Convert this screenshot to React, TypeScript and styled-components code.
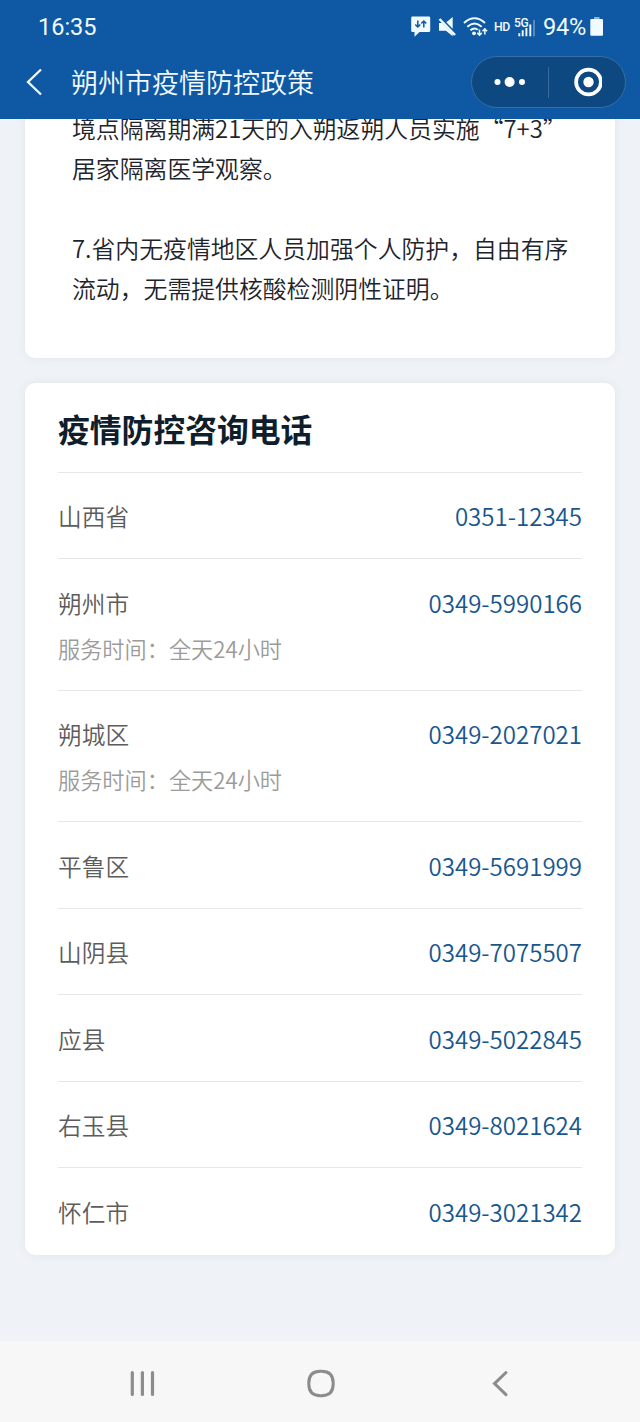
import React from 'react';
import styled, { createGlobalStyle } from 'styled-components';

const GlobalStyle = createGlobalStyle`
  * { box-sizing: border-box; }
  body { margin: 0; background: #eff2f7; }
`;

const Screen = styled.div`
  display: flex;
  flex-direction: column;
  width: 640px;
  height: 1422px;
  overflow: hidden;
  background: #eff3f8;
  font-family: 'Noto Sans CJK SC', sans-serif;
  font-weight: 350;
`;

const Header = styled.header`
  flex: none;
  height: 119px;
  background: #0f59a4;
  color: #f1fbff;
`;

const StatusBar = styled.div`
  display: flex;
  align-items: center;
  justify-content: space-between;
  height: 54px;
  padding: 0 36px 0 38px;
  font-family: Roboto, sans-serif;
  font-weight: 400;
`;

const Clock = styled.span`
  font-size: 23.5px;
  line-height: 28px;
`;

const StatusIcons = styled.div`
  display: flex;
  align-items: center;
  svg { display: block; flex: none; }
`;

const MessageSvg = styled.svg`
  margin-right: 7px;
`;

const MuteSvg = styled.svg`
  margin-right: 6px;
`;

const HdLabel = styled.span`
  width: 20px;
  margin-left: 6px;
  font-size: 12.3px;
  font-weight: 500;
  line-height: 14px;
  letter-spacing: -0.5px;
`;

const Percent = styled.span`
  width: 47px;
  margin-left: 7px;
  font-size: 23.6px;
  line-height: 28px;
  letter-spacing: -0.2px;
`;

const TitleBar = styled.div`
  display: flex;
  align-items: center;
  height: 56px;
  padding: 0 14px 0 26px;
`;

const PageTitle = styled.h1`
  flex: 1;
  margin: 0 0 0 28px;
  font-size: 27px;
  font-weight: 350;
  line-height: 40px;
`;

const Capsule = styled.div`
  display: flex;
  align-items: center;
  width: 155px;
  height: 52px;
  border: 1px solid #356ea9;
  border-radius: 26px;
  background: #0e4881;
`;

const CapsuleButton = styled.button`
  display: flex;
  flex: 1;
  align-items: center;
  justify-content: center;
  height: 100%;
  padding: 0;
  border: 0;
  background: none;
`;

const CapsuleDivider = styled.span`
  width: 1px;
  height: 31px;
  background: #3a6a9b;
`;

const Content = styled.main`
  display: flex;
  flex: 1;
  flex-direction: column;
  gap: 25px;
  min-height: 0;
  padding: 0 25px;
  overflow: hidden;
`;

const Card = styled.section`
  flex: none;
  border-radius: 10px;
  background: #fff;
  box-shadow: 0 0 10px rgba(60, 80, 70, 0.08);
`;

const PolicyCard = styled(Card)`
  height: 280px;
  margin-top: -41px;
  padding: 30px 30px 0 47px;
`;

const Paragraph = styled.p`
  margin: 0 0 40px;
  color: #1d242b;
  font-size: 23.85px;
  line-height: 40px;
  white-space: nowrap;
`;

const PhoneCard = styled(Card)`
  height: 872px;
  padding: 0 33px;
`;

const CardTitle = styled.h2`
  height: 88.5px;
  margin: 0;
  padding-top: 21px;
  color: #0e1e2d;
  font-size: 31.8px;
  font-weight: 700;
  line-height: 48px;
`;

const ContactRow = styled.div<{ $tall: boolean }>`
  height: ${({ $tall }) => ($tall ? 131.5 : 86.6)}px;
  padding-top: 25.5px;
  border-top: 1px solid #e5e7e8;
`;

const ContactLine = styled.div`
  display: flex;
  justify-content: space-between;
  line-height: 36px;
`;

const Region = styled.span`
  color: #5c5c5c;
  font-size: 23.7px;
`;

const Phone = styled.a`
  color: #18578e;
  font-size: 24.05px;
  text-decoration: none;
`;

const Hours = styled.div`
  margin-top: 9px;
  color: #9c9b99;
  font-size: 22.2px;
  line-height: 36px;
`;

const NavBar = styled.nav`
  display: flex;
  flex: none;
  align-items: center;
  justify-content: space-between;
  height: 81px;
  padding: 4px 125px 0 124px;
  background: #f7f7f7;
  svg { display: block; }
`;

const contacts = [
  { region: '山西省', phone: '0351-12345' },
  { region: '朔州市', phone: '0349-5990166', hours: '服务时间：全天24小时' },
  { region: '朔城区', phone: '0349-2027021', hours: '服务时间：全天24小时' },
  { region: '平鲁区', phone: '0349-5691999' },
  { region: '山阴县', phone: '0349-7075507' },
  { region: '应县', phone: '0349-5022845' },
  { region: '右玉县', phone: '0349-8021624' },
  { region: '怀仁市', phone: '0349-3021342' },
];

const MessageIcon = () => (
  <MessageSvg width="20" height="22" viewBox="0 0 20 22">
    <path d="M1.500 .6h16.500q1.200 0 1.200 1.300v12.800q0 1.300-1.200 1.300H8.500L3.500 20.800V16H1.500Q.2 16 .2 14.700V1.900Q.2 .6 1.500 .6z" fill="#f1fbff" />
    <path d="M6.800 4.500v6.500M4.300 8.500l2.500 2.500 2.500-2.500M12.800 11.500V5M10.300 7.500L12.800 5l2.500 2.500" fill="none" stroke="#0f59a4" strokeWidth="1.500" />
  </MessageSvg>
);

const MuteIcon = () => (
  <MuteSvg width="19" height="20" viewBox="0 0 19 20">
    <path d="M1 6h3L14.700 17v2.200L8 13.800H1z" fill="#f1fbff" />
    <path d="M8.300 5.200L14.700 0v11.700z" fill="#f1fbff" />
    <path d="M1.500 2L17 18" stroke="#f1fbff" strokeWidth="2.500" />
  </MuteSvg>
);

const WifiIcon = () => (
  <svg width="25" height="20" viewBox="0 0 25 20">
    <g fill="none" stroke="#f1fbff" strokeWidth="2">
      <path d="M1 6Q11.500-3.500 22 6M4.300 9.800q7.200-6.500 14.400 0M7.400 13.200q3.900-3.300 7.400-.5" />
      <path d="M16.500 12.500v5.500M14.200 15.900l2.300 2.300 2.300-2.300M21.800 17.500v-5.500M19.500 14.300l2.300-2.400 2.300 2.400" strokeWidth="1.500" />
    </g>
    <circle cx="11" cy="16.300" r="1.900" fill="#f1fbff" />
  </svg>
);

const SignalIcon = () => (
  <svg width="22" height="21" viewBox="0 0 22 21">
    <text x="0" y="10" fontFamily="Roboto, sans-serif" fontSize="12" fontWeight="500" letterSpacing="-.4" fill="#f1fbff">5G</text>
    <path d="M5.300 16.300v3M8.700 13.300v6M12.400 11v8.300M16.300 7.500v11.800" stroke="#f1fbff" strokeWidth="1.900" />
    <path d="M20 3v16.300" stroke="#6f9cc9" strokeWidth="1.500" />
  </svg>
);

const BatteryIcon = () => (
  <svg width="14" height="20" viewBox="0 0 14 20">
    <path d="M4 0h5.500v2H4z" fill="#8fb2d5" />
    <rect x=".3" y="2" width="12.700" height="16.700" rx="1" fill="#f1fbff" />
  </svg>
);

export default function App() {
  return (
    <Screen lang="zh-CN">
      <GlobalStyle />
      <Header>
        <StatusBar>
          <Clock>16:35</Clock>
          <StatusIcons>
            <MessageIcon />
            <MuteIcon />
            <WifiIcon />
            <HdLabel>HD</HdLabel>
            <SignalIcon />
            <Percent>94%</Percent>
            <BatteryIcon />
          </StatusIcons>
        </StatusBar>
        <TitleBar>
          <svg width="17" height="28" viewBox="0 0 17 28">
            <path d="M15 1.500L2 14l13 12.500" fill="none" stroke="#f1fbff" strokeWidth="2.300" />
          </svg>
          <PageTitle>朔州市疫情防控政策</PageTitle>
          <Capsule>
            <CapsuleButton aria-label="更多">
              <svg width="32" height="12" viewBox="0 0 32 12" fill="#fff">
                <circle cx="3.500" cy="6" r="3" />
                <circle cx="15.600" cy="6" r="5" />
                <circle cx="28" cy="6" r="3" />
              </svg>
            </CapsuleButton>
            <CapsuleDivider />
            <CapsuleButton aria-label="关闭">
              <svg width="30" height="30" viewBox="0 0 30 30">
                <circle cx="16.500" cy="15" r="12.400" fill="none" stroke="#fff" strokeWidth="3.700" />
                <circle cx="16.500" cy="15" r="5.200" fill="#fff" />
              </svg>
            </CapsuleButton>
          </Capsule>
        </TitleBar>
      </Header>
      <Content>
        <PolicyCard>
          <Paragraph>
            境点隔离期满21天的入朔返朔人员实施“7+3”
            <br />
            居家隔离医学观察。
          </Paragraph>
          <Paragraph>
            7.省内无疫情地区人员加强个人防护，自由有序
            <br />
            流动，无需提供核酸检测阴性证明。
          </Paragraph>
        </PolicyCard>
        <PhoneCard>
          <CardTitle>疫情防控咨询电话</CardTitle>
          {contacts.map(({ region, phone, hours }) => (
            <ContactRow key={region} $tall={Boolean(hours)}>
              <ContactLine>
                <Region>{region}</Region>
                <Phone href={`tel:${phone}`}>{phone}</Phone>
              </ContactLine>
              {hours && <Hours>{hours}</Hours>}
            </ContactRow>
          ))}
        </PhoneCard>
      </Content>
      <NavBar>
        <svg width="36" height="30" viewBox="0 0 36 30">
          <path d="M8.300 3.500v22M18.400 3.500v22M28.500 3.500v22" stroke="#8c8c8c" strokeWidth="3.200" strokeLinecap="round" />
        </svg>
        <svg width="40" height="30" viewBox="0 0 40 30">
          <path d="M14.500 2.300Q2.800 2.300 2.800 14v1Q2.800 26.700 14.500 26.700h1Q27.200 26.700 27.200 15v-1Q27.200 2.300 15.500 2.300z" fill="none" stroke="#8c8c8c" strokeWidth="3" />
        </svg>
        <svg width="24" height="30" viewBox="0 0 24 30">
          <path d="M15 3.500L3.500 14.600 15 25.700" fill="none" stroke="#8c8c8c" strokeWidth="3" strokeLinecap="round" />
        </svg>
      </NavBar>
    </Screen>
  );
}
